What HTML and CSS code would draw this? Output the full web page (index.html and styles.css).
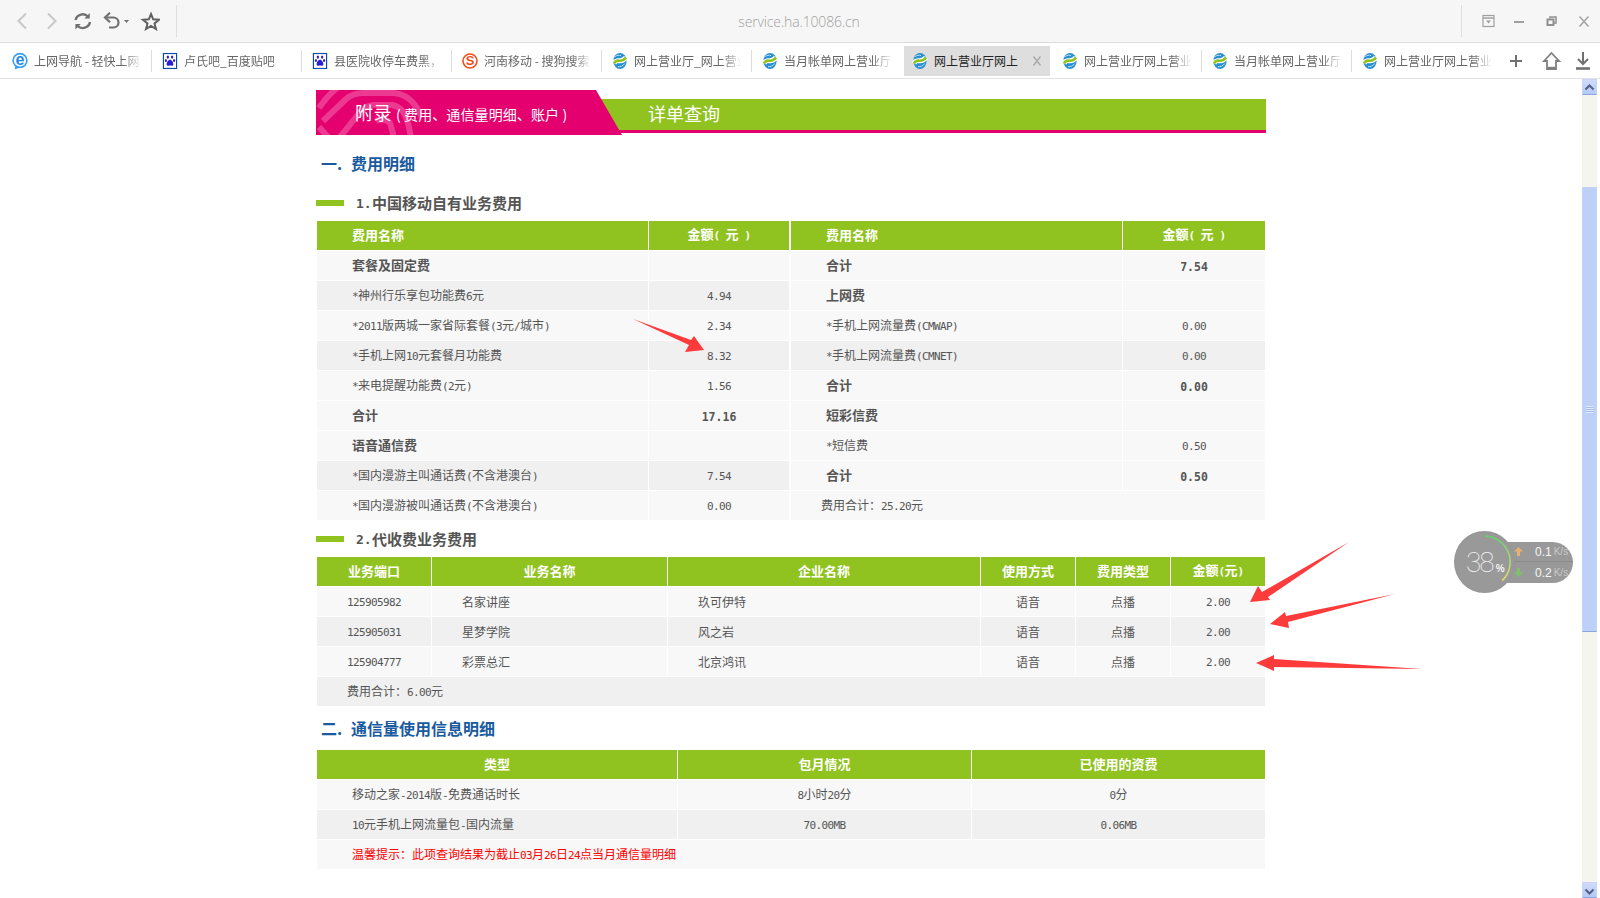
FILE: index.html
```html
<!DOCTYPE html>
<html lang="zh-CN">
<head>
<meta charset="utf-8">
<title>service.ha.10086.cn</title>
<link rel="stylesheet" href="styles.css">
</head>
<body>
<svg class="defs" width="0" height="0" aria-hidden="true">
  <defs>
    <symbol id="cm" viewBox="0 0 16 18">
      <ellipse cx="8" cy="9" rx="6.6" ry="8" fill="#2a8fd2"/>
      <path d="M2 11.5C5 5 9 12.5 14 5.5" fill="none" stroke="#fff" stroke-width="5"/>
      <path d="M2 11.5C5 5 9 12.5 14 5.5" fill="none" stroke="#8fc31f" stroke-width="2.6"/>
      <path d="M3.2 4.6C5 3 7 3 9 3.6" fill="none" stroke="#bfe0f4" stroke-width="1"/>
      <path d="M6 14.6C8.5 15 11 14 12.6 11.6" fill="none" stroke="#bfe0f4" stroke-width="1"/>
    </symbol>
    <symbol id="paw" viewBox="-1 -1 18 20">
      <rect x="0.6" y="0.6" width="14.8" height="16.8" fill="#fff" stroke="#0b4aa8" stroke-width="1.3"/>
      <g fill="#2a1fd0">
        <ellipse cx="5.6" cy="4.6" rx="1.3" ry="1.9"/>
        <ellipse cx="10.4" cy="4.6" rx="1.3" ry="1.9"/>
        <ellipse cx="3.4" cy="8.4" rx="1.2" ry="1.7"/>
        <ellipse cx="12.6" cy="8.4" rx="1.2" ry="1.7"/>
        <path d="M8 7.5C6 7.5 4.2 10.6 4.2 12.6C4.2 14.8 6.5 14.2 8 14.2C9.5 14.2 11.8 14.8 11.8 12.6C11.8 10.6 10 7.5 8 7.5Z"/>
      </g>
    </symbol>
  </defs>
</svg>
<div class="app">
  <header class="toolbar">
    <div class="tool-left">
      <svg class="ico" width="20" height="20" viewBox="0 0 20 20"><path d="M14 2.5L6.5 10L14 17.5" fill="none" stroke="#c8c8c8" stroke-width="2"/></svg>
      <svg class="ico" width="20" height="20" viewBox="0 0 20 20"><path d="M6 2.5L13.5 10L6 17.5" fill="none" stroke="#c8c8c8" stroke-width="2"/></svg>
      <svg class="ico" width="20" height="20" viewBox="0 0 20 20"><path d="M3.5 9A7.5 7.5 0 0 1 16 5.5M18 11A7.5 7.5 0 0 1 5.5 15" fill="none" stroke="#707070" stroke-width="2.4"/><path d="M17.8 2V7.4H12.4ZM3.4 18.4V13H8.8Z" fill="#707070"/></svg>
      <svg class="ico" width="28" height="20" viewBox="0 0 28 20"><path d="M4.5 6.5H11.5A5 5 0 0 1 11.5 16.5H7" fill="none" stroke="#707070" stroke-width="2.2"/><path d="M8 1.8L3 6.5L8 11.2" fill="none" stroke="#707070" stroke-width="2.2"/><path d="M22 9H27L24.5 12Z" fill="#707070"/></svg>
      <svg class="ico" width="20" height="20" viewBox="0 0 20 20"><path d="M11 3L13.2 8.3L19 8.7L14.5 12.4L16 18L11 15L6 18L7.5 12.4L3 8.7L8.8 8.3Z" fill="none" stroke="#606060" stroke-width="2"/></svg>
    </div>
    <div class="url">service.ha.10086.cn</div>
    <div class="tool-right">
      <svg class="ico" width="20" height="20" viewBox="0 0 20 20"><rect x="4" y="4.5" width="11" height="11" fill="#f6f6f6" stroke="#a0a0a0" stroke-width="1.2"/><path d="M4 7H15" stroke="#a0a0a0" stroke-width="1.5"/><path d="M7 9.5H12L9.5 12.5Z" fill="#a0a0a0"/></svg>
      <svg class="ico" width="20" height="20" viewBox="0 0 20 20"><path d="M5 11H15" stroke="#a0a0a0" stroke-width="2"/></svg>
      <svg class="ico" width="23" height="20" viewBox="0 0 23 20"><path d="M11 7.5V6H17V12H15" fill="none" stroke="#909090" stroke-width="1.5"/><rect x="8.5" y="8.5" width="6" height="5.5" fill="none" stroke="#909090" stroke-width="2"/></svg>
      <svg class="ico" width="22" height="20" viewBox="0 0 22 20"><path d="M7.5 5.5L16.5 15.5M16.5 5.5L7.5 15.5" stroke="#a0a0a0" stroke-width="1.4"/></svg>
    </div>
  </header>

  <nav class="tabbar">
    <div class="tab"><svg class="tab-ico" width="16" height="18" viewBox="0 0 16 18"><circle cx="8" cy="8.5" r="6.9" fill="#fff" stroke="#3aa0f0" stroke-width="1.6"/><path d="M3.5 13.5L2.6 17.6L7.6 15.8Z" fill="#3aa0f0"/><text x="8" y="13" class="ie">e</text></svg><span class="tab-text">上网导航 - 轻快上网</span></div>
    <div class="tab"><svg class="tab-ico" width="16" height="18"><use href="#paw"/></svg><span class="tab-text">卢氏吧_百度贴吧</span></div>
    <div class="tab"><svg class="tab-ico" width="16" height="18"><use href="#paw"/></svg><span class="tab-text">县医院收停车费黑，</span></div>
    <div class="tab"><svg class="tab-ico" width="16" height="18" viewBox="0 0 16 18"><circle cx="8" cy="9" r="7" fill="#fff" stroke="#f0501e" stroke-width="1.6"/><text x="8" y="13.4" class="sogou">S</text></svg><span class="tab-text">河南移动 - 搜狗搜索</span></div>
    <div class="tab"><svg class="tab-ico" width="16" height="18"><use href="#cm"/></svg><span class="tab-text">网上营业厅_网上营业</span></div>
    <div class="tab tab-nosep"><svg class="tab-ico" width="16" height="18"><use href="#cm"/></svg><span class="tab-text">当月帐单网上营业厅</span></div>
    <div class="tab tab-active"><svg class="tab-ico" width="16" height="18"><use href="#cm"/></svg><span class="tab-text">网上营业厅网上</span><svg class="tab-close" width="10" height="10" viewBox="0 0 10 10"><path d="M1.5 0.5L8.5 9.5M8.5 0.5L1.5 9.5" stroke="#a8a8a8" stroke-width="1.4"/></svg></div>
    <div class="tab"><svg class="tab-ico" width="16" height="18"><use href="#cm"/></svg><span class="tab-text">网上营业厅网上营业</span></div>
    <div class="tab"><svg class="tab-ico" width="16" height="18"><use href="#cm"/></svg><span class="tab-text">当月帐单网上营业厅</span></div>
    <div class="tab tab-nosep"><svg class="tab-ico" width="16" height="18"><use href="#cm"/></svg><span class="tab-text">网上营业厅网上营业</span></div>
    <div class="tab-tools">
      <svg class="ico" width="20" height="20" viewBox="0 0 20 20"><path d="M4 10H16M10 4V16" stroke="#707070" stroke-width="2"/></svg>
      <svg class="ico" width="23" height="20" viewBox="0 0 23 20"><path d="M13.5 2L21 10H18V18H9V10H6Z" fill="none" stroke="#808080" stroke-width="1.8"/><path d="M9 17H18" stroke="#808080" stroke-width="2.4"/></svg>
      <svg class="ico" width="20" height="20" viewBox="0 0 20 20"><path d="M10 1V12.5M5 8L10 13L15 8" fill="none" stroke="#707070" stroke-width="2"/><path d="M3 17.5H17" stroke="#707070" stroke-width="2.6"/></svg>
    </div>
  </nav>

  <div class="viewport">
    <main class="page">
      <div class="banner">
        <div class="banner-green">详单查询</div>
        <div class="banner-pink">
          <svg class="banner-pattern" width="106" height="45" viewBox="0 0 106 45"><g fill="none" stroke="#ec3a92" stroke-width="6"><path d="M3 18Q11 6 22 -3"/><path d="M7 31L30 9Q37 3 48 3H78Q97 5 106 28"/><path d="M24 47L41 26Q47 17 57 15H76Q88 17 92 33L95 47"/><path d="M3 37L12 47"/><path d="M60 31Q68 27 74 33L78 47"/></g></svg>
          <span class="banner-main">附录</span><span class="banner-sub">( 费用、通信量明细、账户 )</span>
        </div>
      </div>

      <h2 class="sec"><span class="sec-no">一.</span>费用明细</h2>
      <h3 class="sub"><i class="sub-bar"></i><span class="sub-no">1.</span>中国移动自有业务费用</h3>
      <table class="tbl">
        <colgroup><col class="w332"><col class="w142"><col class="w332"><col class="w142"></colgroup>
        <thead><tr><th class="l">费用名称</th><th class="gapless">金额<span class="a">( </span>元<span class="a"> )</span></th><th class="l">费用名称</th><th>金额<span class="a">( </span>元<span class="a"> )</span></th></tr></thead>
        <tbody>
          <tr><td class="l b">套餐及固定费</td><td class="gap"></td><td class="l b">合计</td><td class="b"><span class="ab">7.54</span></td></tr>
          <tr><td class="l alt"><span class="a">*</span>神州行乐享包功能费<span class="a">6</span>元</td><td class="alt gap"><span class="a">4.94</span></td><td class="l b">上网费</td><td></td></tr>
          <tr><td class="l"><span class="a">*2011</span>版两城一家省际套餐<span class="a">(3</span>元<span class="a">/</span>城市<span class="a">)</span></td><td class="gap"><span class="a">2.34</span></td><td class="l"><span class="a">*</span>手机上网流量费<span class="a">(CMWAP)</span></td><td><span class="a">0.00</span></td></tr>
          <tr><td class="l alt"><span class="a">*</span>手机上网<span class="a">10</span>元套餐月功能费</td><td class="alt gap"><span class="a">8.32</span></td><td class="l alt"><span class="a">*</span>手机上网流量费<span class="a">(CMNET)</span></td><td class="alt"><span class="a">0.00</span></td></tr>
          <tr><td class="l"><span class="a">*</span>来电提醒功能费<span class="a">(2</span>元<span class="a">)</span></td><td class="gap"><span class="a">1.56</span></td><td class="l b">合计</td><td class="b"><span class="ab">0.00</span></td></tr>
          <tr><td class="l b">合计</td><td class="b gap"><span class="ab">17.16</span></td><td class="l b">短彩信费</td><td></td></tr>
          <tr><td class="l b">语音通信费</td><td class="gap"></td><td class="l"><span class="a">*</span>短信费</td><td><span class="a">0.50</span></td></tr>
          <tr><td class="l alt"><span class="a">*</span>国内漫游主叫通话费<span class="a">(</span>不含港澳台<span class="a">)</span></td><td class="alt gap"><span class="a">7.54</span></td><td class="l b">合计</td><td class="b"><span class="ab">0.50</span></td></tr>
          <tr><td class="l"><span class="a">*</span>国内漫游被叫通话费<span class="a">(</span>不含港澳台<span class="a">)</span></td><td class="gap"><span class="a">0.00</span></td><td class="t" colspan="2">费用合计：<span class="a">25.20</span>元</td></tr>
        </tbody>
      </table>

      <h3 class="sub"><i class="sub-bar"></i><span class="sub-no">2.</span>代收费业务费用</h3>
      <table class="tbl">
        <colgroup><col class="w115"><col class="w236"><col class="w313"><col class="w95"><col class="w95"><col class="w94"></colgroup>
        <thead><tr><th>业务端口</th><th>业务名称</th><th>企业名称</th><th>使用方式</th><th>费用类型</th><th>金额<span class="a">(</span>元<span class="a">)</span></th></tr></thead>
        <tbody>
          <tr><td><span class="a">125905982</span></td><td class="t">名家讲座</td><td class="t">玖可伊特</td><td>语音</td><td>点播</td><td><span class="a">2.00</span></td></tr>
          <tr><td class="alt"><span class="a">125905031</span></td><td class="t alt">星梦学院</td><td class="t alt">风之岩</td><td class="alt">语音</td><td class="alt">点播</td><td class="alt"><span class="a">2.00</span></td></tr>
          <tr><td><span class="a">125904777</span></td><td class="t">彩票总汇</td><td class="t">北京鸿讯</td><td>语音</td><td>点播</td><td><span class="a">2.00</span></td></tr>
          <tr><td class="t alt" colspan="6">费用合计：<span class="a">6.00</span>元</td></tr>
        </tbody>
      </table>

      <h2 class="sec"><span class="sec-no">二.</span>通信量使用信息明细</h2>
      <table class="tbl">
        <colgroup><col class="w361"><col class="w294"><col class="w293"></colgroup>
        <thead><tr><th>类型</th><th>包月情况</th><th>已使用的资费</th></tr></thead>
        <tbody>
          <tr><td class="l">移动之家<span class="a">-2014</span>版<span class="a">-</span>免费通话时长</td><td><span class="a">8</span>小时<span class="a">20</span>分</td><td><span class="a">0</span>分</td></tr>
          <tr><td class="l alt"><span class="a">10</span>元手机上网流量包<span class="a">-</span>国内流量</td><td class="alt"><span class="a">70.00MB</span></td><td class="alt"><span class="a">0.06MB</span></td></tr>
          <tr><td class="l warn" colspan="3">温馨提示：此项查询结果为截止<span class="a">03</span>月<span class="a">26</span>日<span class="a">24</span>点当月通信量明细</td></tr>
        </tbody>
      </table>
    </main>

    <aside class="scrollbar">
      <div class="sb-btn"><svg width="15" height="16" viewBox="0 0 15 16"><path d="M3.5 9.5L7.5 5.5L11.5 9.5" fill="none" stroke="#4d6185" stroke-width="2"/></svg></div>
      <div class="sb-gap"></div>
      <div class="sb-thumb"><span class="sb-grip"></span></div>
      <div class="sb-rest"></div>
      <div class="sb-btn"><svg width="15" height="16" viewBox="0 0 15 16"><path d="M3.5 6.5L7.5 10.5L11.5 6.5" fill="none" stroke="#4d6185" stroke-width="2"/></svg></div>
    </aside>
  </div>

  <svg class="arrows" width="1600" height="898" viewBox="0 0 1600 898" aria-hidden="true">
    <g fill="#fe3b3b">
      <polygon points="633,319 691,340 694,336 704,350 685,352 689,345"/>
      <polygon points="1349,542 1268,597 1270,600 1250,602 1258,586 1262,592"/>
      <polygon points="1395,594 1288,622 1289,628 1270,624 1285,612 1286,616"/>
      <polygon points="1422,669 1274,667 1274,671 1256,663 1274,655 1274,659"/>
    </g>
  </svg>

  <div class="meter">
    <div class="meter-dial">
      <svg class="meter-ring" width="59" height="60" viewBox="0 0 59 60"><defs><linearGradient id="rg" x1="0" y1="0" x2="0" y2="1"><stop offset="0" stop-color="#62d46c"/><stop offset="1" stop-color="#e8dc6a"/></linearGradient></defs><path d="M30 4A26 26 0 0 1 47.2 48.7" fill="none" stroke="url(#rg)" stroke-width="1.6"/></svg>
      <span class="meter-num">38</span><span class="meter-pct">%</span>
    </div>
    <div class="meter-pill">
      <div class="meter-row meter-row-top"><svg width="9" height="9" viewBox="0 0 9 9"><path d="M4.5 0L9 4.5H6V9H3V4.5H0Z" fill="#e8b070"/></svg><span class="meter-val">0.1</span><span class="meter-unit">K/s</span></div>
      <div class="meter-row"><svg width="9" height="9" viewBox="0 0 9 9"><path d="M4.5 9L9 4.5H6V0H3V4.5H0Z" fill="#7fc06a"/></svg><span class="meter-val">0.2</span><span class="meter-unit">K/s</span></div>
    </div>
  </div>
</div>
</body>
</html>
```
FILE: styles.css
```css
* { box-sizing: border-box; }
html, body { margin: 0; padding: 0; }
body {
  width: 1600px;
  height: 898px;
  overflow: hidden;
  background: #fff;
  color: #555;
  font: 12px/1.2 "Noto Sans CJK SC", "Noto Sans", sans-serif;
}
.defs { display: block; height: 0; }
.app { position: relative; width: 1600px; height: 898px; display: flex; flex-direction: column; }
.ico { display: block; flex: none; }

/* browser toolbar */
.toolbar { height: 43px; flex: none; display: flex; align-items: center; background: #f6f6f6; border-bottom: 1px solid #dcdcdc; }
.tool-left { width: 177px; height: 32px; flex: none; display: flex; align-items: center; gap: 10px; padding-left: 12px; border-right: 1px solid #dedede; }
.url { flex: 1; padding: 1px 40px 0 0; text-align: center; font: 300 14px/20px "Open Sans", sans-serif; color: #a0a0a0; letter-spacing: -0.15px; }
.tool-right { width: 139px; height: 32px; flex: none; display: flex; align-items: center; gap: 10px; padding-left: 17px; border-left: 1px solid #dedede; }

/* tab strip */
.tabbar { height: 36px; flex: none; display: flex; align-items: center; padding-left: 2px; border-bottom: 1px solid #e2e2e2; background: #fff; }
.tab { width: 150px; height: 30px; flex: none; display: flex; align-items: center; padding-left: 10px; }
.tab::after { content: ""; width: 1px; height: 22px; margin-left: auto; background: #dcdcdc; }
.tab-nosep::after, .tab-active::after { display: none; }
.tab-ico { flex: none; display: block; }
.tab-text { width: 108px; margin-left: 6px; flex: none; white-space: nowrap; overflow: hidden; color: #666; line-height: 18px;
  -webkit-mask-image: linear-gradient(to right, #000 82%, transparent); mask-image: linear-gradient(to right, #000 82%, transparent); }
.tab-active { width: 146px; margin: 0 2px; padding-left: 8px; background: #dedede; }
.tab-active .tab-text { width: 84px; color: #222; -webkit-mask-image: none; mask-image: none; }
.tab-close { margin-left: 14px; flex: none; }
.tab-tools { display: flex; align-items: center; gap: 12px; padding-left: 4px; }
.sogou { font: 700 13px "Liberation Sans", sans-serif; fill: #f0501e; text-anchor: middle; }
.ie { font: 700 16px "Liberation Sans", sans-serif; fill: #1e8ae6; text-anchor: middle; }

/* page */
.viewport { flex: 1; min-height: 0; display: flex; }
.page { flex: 1; display: flex; flex-direction: column; padding: 11px 0 0 316px; }
.banner { position: relative; width: 950px; height: 45px; flex: none; margin-bottom: 7px; }
.banner-green { position: relative; top: 9px; height: 34px; padding: 1px 0 0 332px; background: #90c31f; border-bottom: 3px solid #e5006f; color: #fff; font-size: 18px; line-height: 26px; }
.banner-pink { position: absolute; left: 0; top: 0; width: 306px; height: 45px; padding-left: 39px; background: #e5006f; color: #fff; clip-path: polygon(0 0, 280px 0, 306px 100%, 0 100%); display: flex; align-items: center; }
.banner-pattern { position: absolute; left: 0; top: 0; }
.banner-main { position: relative; font-size: 18px; letter-spacing: 0.5px; }
.banner-sub { position: relative; margin-left: 4px; font-size: 14px; padding-top: 3px; letter-spacing: 0.1px; }

.sec { flex: none; margin: 8px 0 5px; height: 30px; display: flex; align-items: center; padding: 0 0 3px 5px; font-size: 16px; font-weight: 700; line-height: 27px; color: #1a5a9e; }
.sec-no { width: 30px; flex: none; }
.sub { flex: none; margin: 3px 0; height: 30px; display: flex; align-items: center; font-size: 15px; font-weight: 700; color: #555; }
.sub-bar { width: 28px; height: 6px; flex: none; margin: -1px 12px 0 0; background: #90c31f; }
.sub-no { width: 16px; flex: none; font: 700 13px "DejaVu Sans Mono", monospace; }

/* tables */
.tbl { flex: none; width: 948px; margin-left: 1px; border-collapse: separate; border-spacing: 0; table-layout: fixed; }
.tbl th, .tbl td { height: 30px; padding: 0; text-align: center; vertical-align: middle; border-right: 1px solid #fff; border-bottom: 1px solid #fff; line-height: 18px; white-space: nowrap; }
.tbl th:last-child, .tbl td:last-child { border-right: 0; }
.tbl th { padding-bottom: 2px; background: #90c31f; color: #fff; font-size: 13px; font-weight: 700; }
.tbl th .a { font-weight: 700; }
.tbl td { background: #f8f8f8; color: #555; }
.tbl td.alt { background: #f0f0f0; }
.tbl .l { text-align: left; padding-left: 35px; }
.tbl .t { text-align: left; padding-left: 30px; }
.tbl td.b { padding-bottom: 2px; font-size: 13px; font-weight: 700; }
.tbl .gap, .tbl .gapless { border-right-width: 2px; }
.tbl td.warn { color: #f00; }
.w332 { width: 332px; } .w142 { width: 142px; }
.w115 { width: 115px; } .w236 { width: 236px; } .w313 { width: 313px; } .w95 { width: 95px; } .w94 { width: 94px; }
.w361 { width: 361px; } .w294 { width: 294px; } .w293 { width: 293px; }
.a { font: 11px/18px "DejaVu Sans Mono", monospace; letter-spacing: -0.62px; }
.ab { font: 700 11.5px/18px "DejaVu Sans Mono", monospace; position: relative; top: 2px; }

/* scrollbar */
.scrollbar { width: 15px; flex: none; margin-right: 3px; display: flex; flex-direction: column; background: #f5f5f0; }
.sb-btn { height: 16px; flex: none; background: linear-gradient(to bottom, #cfdcfb, #b4c8f6); border: 1px solid #c8d6f4; border-bottom-color: #8aa4dc; }
.sb-btn svg { display: block; margin-left: -1px; }
.sb-gap { height: 92px; flex: none; }
.sb-thumb { height: 445px; flex: none; display: flex; align-items: center; justify-content: center; background: #bcd0f8; border: 1px solid #c4d4f6; border-bottom-color: #8aa4dc; }
.sb-grip { width: 7px; height: 7px; background: repeating-linear-gradient(to bottom, #e2eafc 0 1px, #a5bbe8 1px 2px); }
.sb-rest { flex: 1; }

/* overlays */
.arrows { position: absolute; left: 0; top: 0; pointer-events: none; }
.meter { position: absolute; left: 1455px; top: 532px; width: 118px; height: 60px; display: flex; align-items: center; }
.meter-dial { position: relative; z-index: 1; width: 59px; height: 60px; flex: none; border-radius: 50%; background: #999; box-shadow: 0 0 0 1px #959595; display: flex; align-items: baseline; padding: 16px 0 0 11px; color: #f4f4f4; }
.meter-ring { position: absolute; left: 0; top: 0; }
.meter-num { font: 100 28px/30px Roboto, sans-serif; letter-spacing: -2px; }
.meter-pct { font: 700 10px/12px "Liberation Sans", sans-serif; margin-left: 3px; }
.meter-pill { width: 78px; height: 41px; flex: none; margin-left: -19px; padding-left: 19px; border-radius: 0 21px 21px 0; background: #999; display: flex; flex-direction: column; }
.meter-row { height: 20.5px; display: flex; align-items: center; padding-top: 1px; }
.meter-row-top { border-bottom: 1px solid #8c8c8c; }
.meter-val { margin-left: 12px; font: 12px "Liberation Sans", sans-serif; color: #f6f6f6; }
.meter-unit { margin-left: 2px; font: 10px "Liberation Sans", sans-serif; color: #c8c8c8; }
```
